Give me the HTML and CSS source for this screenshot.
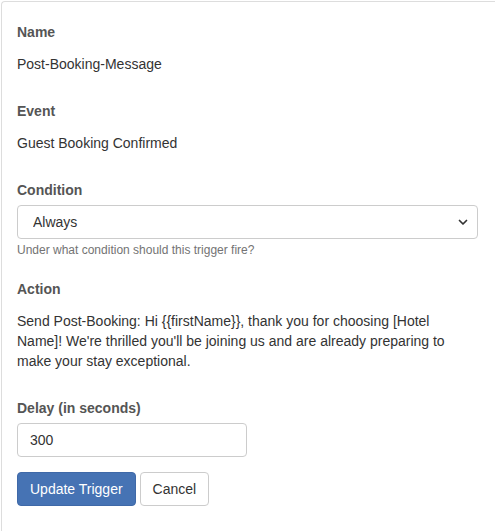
FILE: index.html
```html
<!DOCTYPE html>
<html>
<head>
<meta charset="utf-8">
<link rel="stylesheet" href="styles.css">
</head>
<body>
<div class="panel">
  <div class="group">
    <div class="label">Name</div>
    <div class="static">Post-Booking-Message</div>
  </div>
  <div class="group">
    <div class="label">Event</div>
    <div class="static">Guest Booking Confirmed</div>
  </div>
  <div class="group">
    <div class="label">Condition</div>
    <div class="select-wrap">
      <select class="control select">
        <option>Always</option>
      </select>
      <svg class="chevron" width="10" height="7" viewBox="0 0 10 7"><path d="M1.5 1.5 L5 5 L8.5 1.5" fill="none" stroke="#333" stroke-width="1.7" stroke-linecap="round" stroke-linejoin="round"/></svg>
    </div>
    <div class="help">Under what condition should this trigger fire?</div>
  </div>
  <div class="group">
    <div class="label">Action</div>
    <div class="static">Send Post-Booking: Hi {{firstName}}, thank you for choosing [Hotel Name]! We're thrilled you'll be joining us and are already preparing to make your stay exceptional.</div>
  </div>
  <div class="group last">
    <div class="label">Delay (in seconds)</div>
    <input class="control input" type="text" value="300">
  </div>
  <div class="buttons">
    <button class="btn primary">Update Trigger</button>
    <button class="btn default">Cancel</button>
  </div>
</div>
</body>
</html>
```
FILE: styles.css
```css
html, body {
  margin: 0;
  padding: 0;
  background: #fff;
}
body {
  font-family: "Liberation Sans", Arial, Helvetica, sans-serif;
  font-size: 14px;
  line-height: 20px;
  color: #333;
}
.panel {
  margin: 1px 0 0 1px;
  border: 1px solid #ddd;
  border-right: none;
  border-bottom: none;
  border-top-left-radius: 4px;
  padding: 20px 15px 0 15px;
  min-height: 530px;
  box-sizing: border-box;
}
.group {
  margin-bottom: 20px;
}
.group.last {
  margin-bottom: 15px;
}
.label {
  font-weight: bold;
  color: #555;
  margin-bottom: 5px;
}
.static {
  padding: 7px 12px 7px 0;
  min-height: 20px;
}
.control {
  display: block;
  box-sizing: border-box;
  height: 34px;
  border: 1px solid #ccc;
  border-radius: 4px;
  background: #fff;
  font-family: "Liberation Sans", Arial, Helvetica, sans-serif;
  font-size: 14px;
  line-height: 20px;
  color: #333;
  margin: 0;
}
.select-wrap {
  position: relative;
  width: 461px;
}
.select {
  width: 100%;
  padding: 6px 12px 6px 15px;
  -webkit-appearance: none;
  appearance: none;
}
.chevron {
  position: absolute;
  right: 10px;
  top: 14px;
}
.input {
  width: 230px;
  padding: 6px 12px;
}
.help {
  margin-top: 3px;
  font-size: 12px;
  line-height: 17px;
  color: #737373;
}
.buttons {
  display: flex;
  gap: 4px;
}
.btn {
  box-sizing: border-box;
  height: 34px;
  padding: 6px 12px;
  border: 1px solid transparent;
  border-radius: 4px;
  font-family: "Liberation Sans", Arial, Helvetica, sans-serif;
  font-size: 14px;
  line-height: 20px;
}
.primary {
  background: #4673b4;
  border-color: #3f69a8;
  color: #fff;
}
.default {
  background: #fff;
  border-color: #ccc;
  color: #333;
}
```
